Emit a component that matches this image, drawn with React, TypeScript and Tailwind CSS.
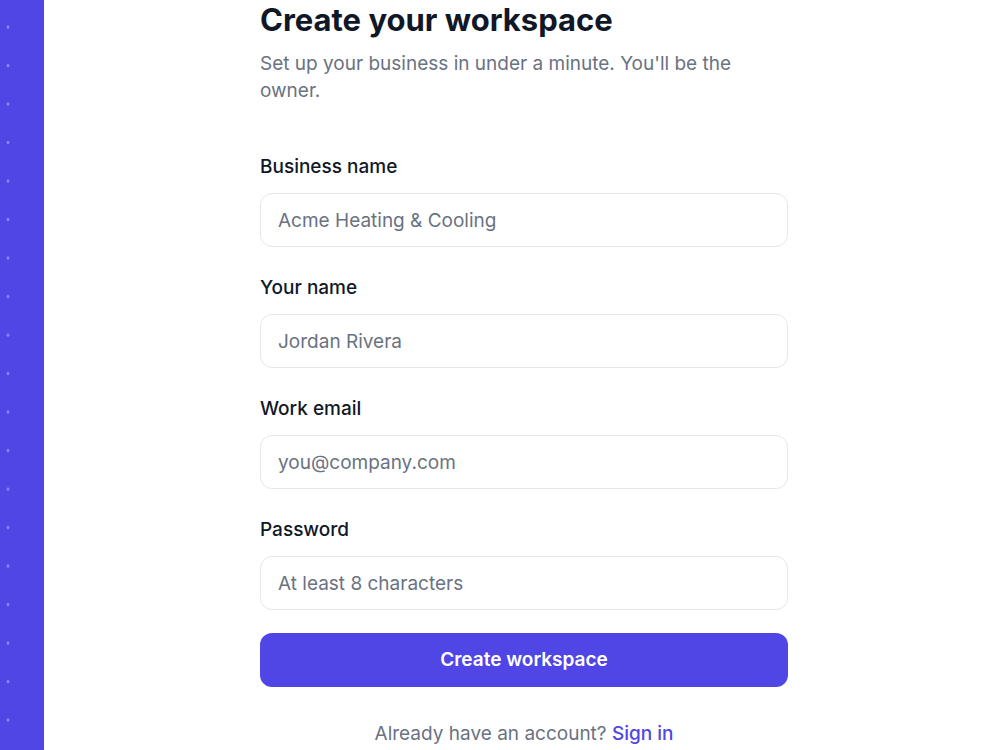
const fields = [
  { id: 'business', label: 'Business name', type: 'text', placeholder: 'Acme Heating & Cooling' },
  { id: 'name', label: 'Your name', type: 'text', placeholder: 'Jordan Rivera' },
  { id: 'email', label: 'Work email', type: 'email', placeholder: 'you@company.com' },
  { id: 'password', label: 'Password', type: 'password', placeholder: 'At least 8 characters' },
];

export default function App() {
  return (
    <div className="flex min-h-screen bg-white font-['Inter',sans-serif]">
      {/* brand rail with dotted texture */}
      <aside className="w-[44px] shrink-0 bg-[#4f46e5] bg-[radial-gradient(circle_at_8px_27px,rgba(150,145,250,0.85)_1.2px,transparent_1.8px)] bg-[size:44px_38.5px] bg-repeat" />

      <main className="flex flex-1 justify-center pl-[4px]">
        <div className="w-[528px]">
          <h1 className="text-[31px] leading-[40px] font-bold text-gray-900">Create your workspace</h1>
          <p className="mt-[10px] text-[19px] leading-[27px] text-gray-500">
            Set up your business in under a minute. You'll be the owner.
          </p>

          <form className="mt-[48px]" onSubmit={(e) => e.preventDefault()}>
            <div className="flex flex-col gap-[26px]">
              {fields.map((f) => (
                <div key={f.id}>
                  <label htmlFor={f.id} className="block pt-px text-[19px] leading-7 font-medium text-gray-900">
                    {f.label}
                  </label>
                  <input
                    id={f.id}
                    type={f.type}
                    placeholder={f.placeholder}
                    className="mt-[12px] h-[54px] w-full rounded-xl border border-gray-200 px-[17px] text-[19px] text-gray-900 placeholder:text-gray-500 outline-none"
                  />
                </div>
              ))}
            </div>

            <button
              type="submit"
              className="mt-[23px] h-[54px] w-full rounded-xl bg-[#4f46e5] pt-px text-[19px] font-semibold text-white"
            >
              Create workspace
            </button>
          </form>

          <p className="mt-[33px] text-center text-[19px] leading-7 text-gray-500">
            Already have an account?{' '}
            <a href="#" className="font-medium text-[#4f46e5]">
              Sign in
            </a>
          </p>
        </div>
      </main>
    </div>
  );
}
